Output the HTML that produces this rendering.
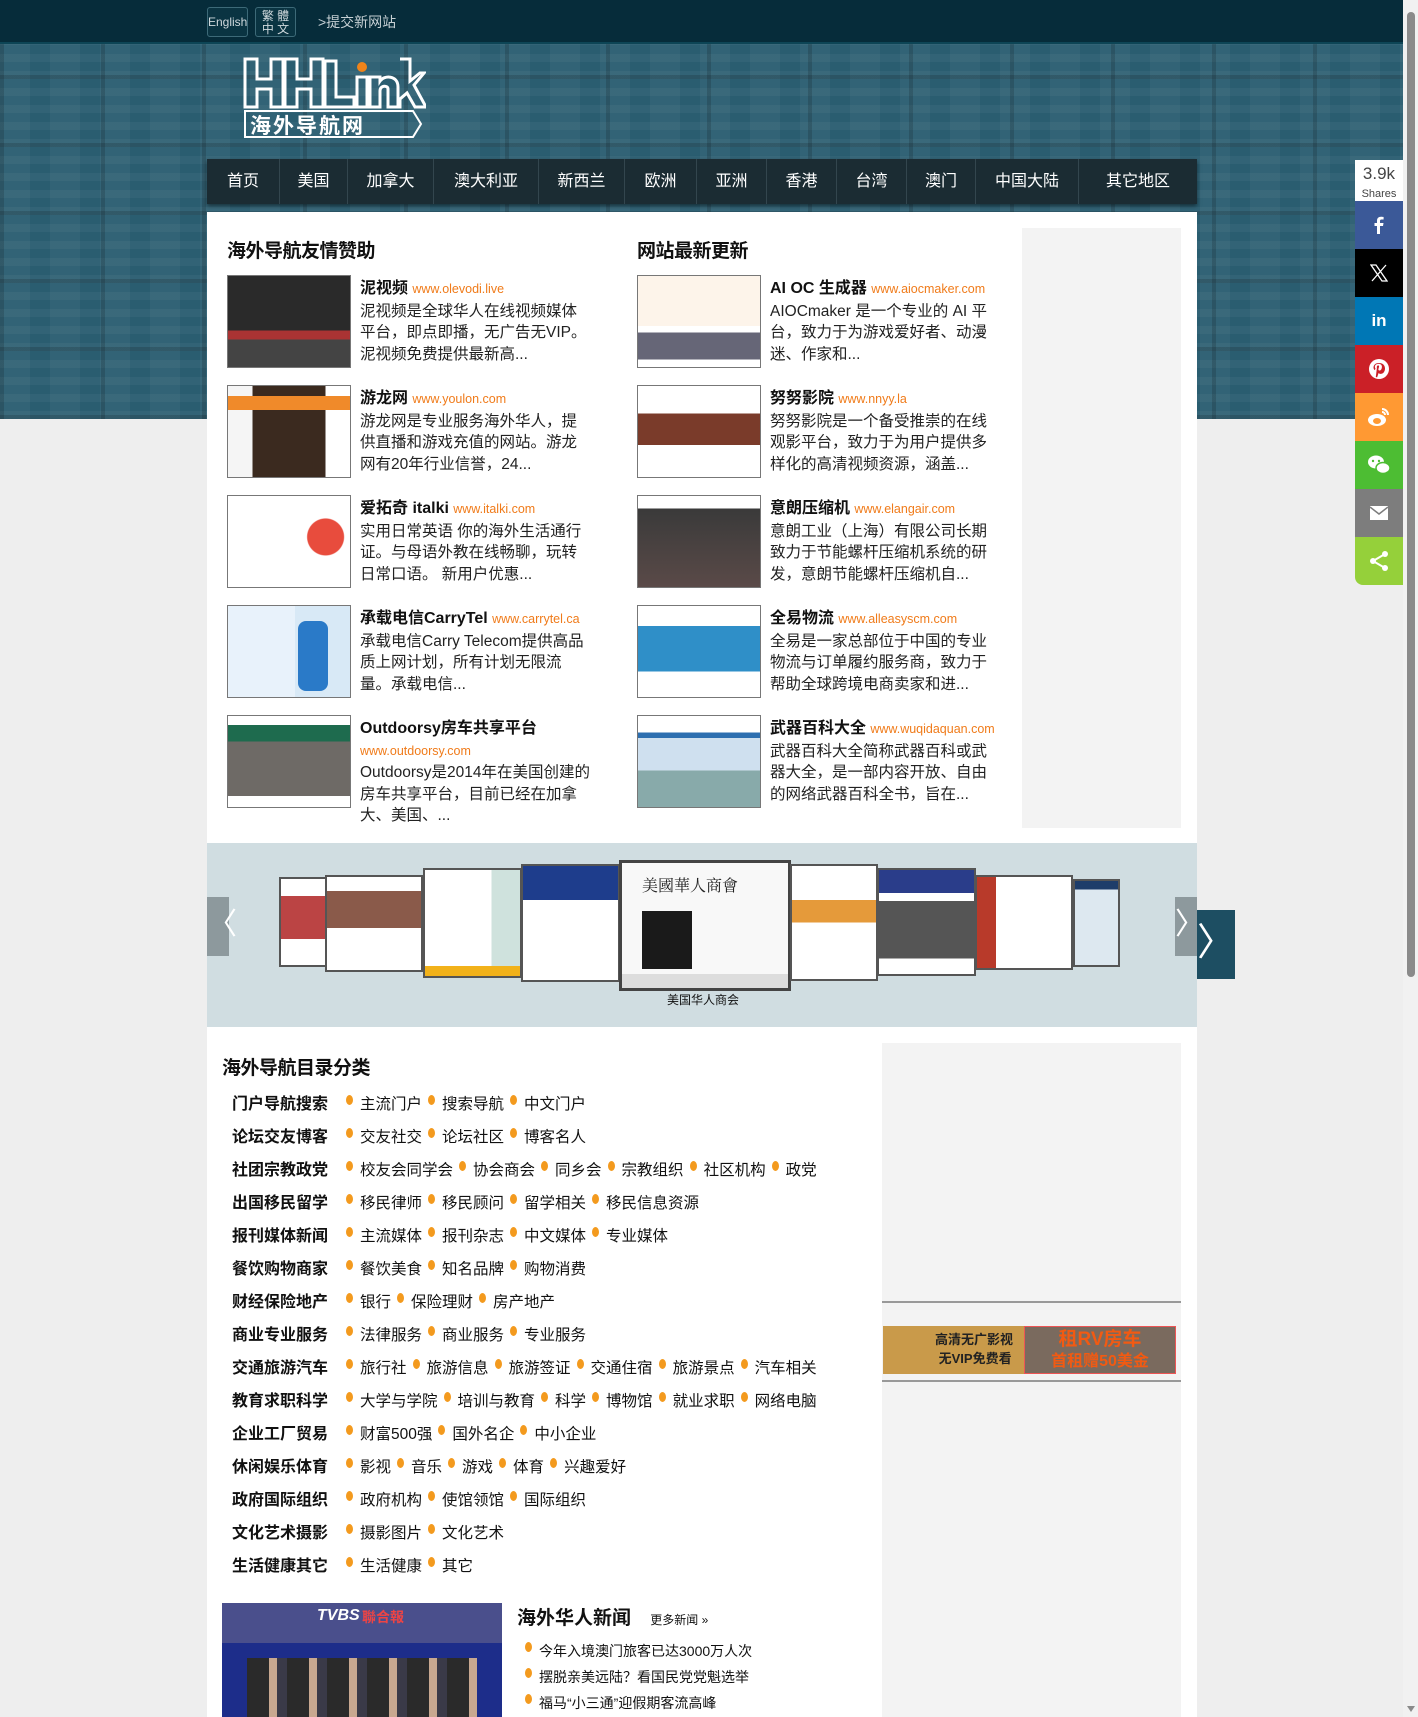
<!DOCTYPE html>
<html><head><meta charset="utf-8">
<style>
*{margin:0;padding:0;box-sizing:border-box}
body{width:1418px;height:1717px;overflow:hidden;position:relative;background:#eeeeee;font-family:"Liberation Sans","Noto Sans CJK SC",sans-serif;color:#111}
.abs{position:absolute}
#top{left:0;top:0;width:1403px;height:44px;background:#062c3a;border-bottom:2px solid #0d4556}
#hdr{left:0;top:44px;width:1403px;height:375px;background-color:#2a5d70;
background-image:repeating-linear-gradient(90deg,rgba(0,0,0,.15) 0 4px,transparent 4px 101px),repeating-linear-gradient(0deg,rgba(0,0,0,.15) 0 4px,transparent 4px 68px),repeating-linear-gradient(90deg,rgba(255,255,255,.04) 0 30px,transparent 30px 50px),repeating-linear-gradient(0deg,rgba(255,255,255,.04) 0 8px,transparent 8px 17px);}
.lb{border:1px solid #3d6a78;border-radius:3px;color:#cfd8dc;font-size:13px;text-align:center;background:#0a3442}
#nav{left:207px;top:159px;width:990px;height:45px;background:#1b2c33;box-shadow:0 2px 4px rgba(0,0,0,.5);display:flex}
#nav div{color:#fff;font-size:16px;line-height:45px;text-align:center;border-right:1px solid #33464e}
#main{left:207px;top:212px;width:990px;height:631px;background:#fff}
h2{font-size:19px;font-weight:bold;position:absolute;color:#111;letter-spacing:-.5px}
.item{position:absolute;width:380px;height:100px}
.item .th{position:absolute;left:0;top:0;width:124px;height:93px;border:1px solid #777;overflow:hidden}
.item .tx{position:absolute;left:133px;top:3px;width:230px;font-size:15.5px;line-height:21.5px;color:#222}
.item b{font-size:16px;color:#111}
.item i{font-style:normal;color:#f07b1a;font-size:12.5px}
#car{left:207px;top:843px;width:990px;height:184px;background:#d0dde1}
.sh{position:absolute;border:2px solid #555;overflow:hidden;background:#fff}
#low{left:207px;top:1027px;width:990px;height:690px;background:#fff}
.row{position:absolute;left:25px;font-size:15.5px;height:22px;line-height:22px;white-space:nowrap}
.row b{display:inline-block;width:114px;font-size:16px}
.row span{margin-right:6px}
.row span:before{content:"";display:inline-block;width:7px;height:10px;border-radius:50%;background:#f39a1e;margin-right:7px;vertical-align:4px}
#share{left:1355px;top:160px;width:48px}
#share div.b{height:48px;display:flex;align-items:center;justify-content:center}
</style></head><body>
<div id="top" class="abs">
 <div class="abs lb" style="left:207px;top:7px;width:41px;height:30px;line-height:28px;font-size:12px">English</div>
 <div class="abs lb" style="left:255px;top:7px;width:41px;height:30px;line-height:13px;font-size:12px;padding-top:2px">繁 體<br>中 文</div>
 <div class="abs" style="left:318px;top:12px;color:#c6d0d4;font-size:14px">&gt;提交新网站</div>
</div>
<div id="hdr" class="abs"></div>
<svg class="abs" style="left:242px;top:57px" width="184" height="90" viewBox="0 0 184 90">
 <g fill="none" stroke="#fff" stroke-width="3">
  <path d="M3 2h12v20h14v-20h12v48h-12v-18h-14v18h-12z"/>
  <path d="M43 2h12v20h14v-20h12v48h-12v-18h-14v18h-12z"/>
  <path d="M83 4h11v36h18v10h-29z"/>
  <path d="M115 20h10v30h-10z"/>
  <path d="M128 20h10v4c4-6 18-6 18 6v20h-10v-18c0-4-8-4-8 2v16h-10z"/>
  <path d="M158 2h10v22l10-8h4l-10 12 12 22h-11l-8-14-7 6v8h-10"/>
  <path d="M3 54h168l8 13-8 13h-168z" stroke-width="2"/>
 </g>
 <circle cx="120" cy="10" r="5" fill="#f0841a"/>
 <text x="8" y="76" fill="#fff" font-size="21" font-family="Noto Sans CJK SC,sans-serif" font-weight="bold" letter-spacing="2">海外导航网</text>
</svg>
<div id="nav" class="abs">
 <div style="width:73px">首页</div><div style="width:68px">美国</div><div style="width:86px">加拿大</div><div style="width:105px">澳大利亚</div><div style="width:86px">新西兰</div><div style="width:72px">欧洲</div><div style="width:70px">亚洲</div><div style="width:70px">香港</div><div style="width:70px">台湾</div><div style="width:69px">澳门</div><div style="width:103px">中国大陆</div><div style="width:118px;border:none">其它地区</div>
</div>

<div id="main" class="abs">
 <h2 style="left:20px;top:24px">海外导航友情赞助</h2>
 <h2 style="left:430px;top:24px">网站最新更新</h2>
 <div class="abs" style="left:815px;top:16px;width:159px;height:600px;background:#f3f3f3"></div>

 <div class="item" style="left:20px;top:63px"><div class="th" style="background:linear-gradient(#2a2a2a 0 60%,#a33 60% 70%,#444 70%)"></div><div class="tx"><b>泥视频</b> <i>www.olevodi.live</i><br>泥视频是全球华人在线视频媒体平台，即点即播，无广告无VIP。泥视频免费提供最新高...</div></div>
 <div class="item" style="left:20px;top:173px"><div class="th" style="background:linear-gradient(90deg,#f5f5f5 0 20%,#3b2a1f 20% 80%,#fff 80%);"><div style="height:14px;background:#f08a2a;margin-top:10px"></div></div><div class="tx"><b>游龙网</b> <i>www.youlon.com</i><br>游龙网是专业服务海外华人，提供直播和游戏充值的网站。游龙网有20年行业信誉，24...</div></div>
 <div class="item" style="left:20px;top:283px"><div class="th" style="background:radial-gradient(circle at 80% 45%,#e84c3d 0 18px,#fff 19px)"></div><div class="tx"><b>爱拓奇 italki</b> <i>www.italki.com</i><br>实用日常英语 你的海外生活通行证。与母语外教在线畅聊，玩转日常口语。 新用户优惠...</div></div>
 <div class="item" style="left:20px;top:393px"><div class="th" style="background:linear-gradient(90deg,#e8f2fb 0 55%,#d8e9f6 55%)"><div style="position:absolute;left:70px;top:15px;width:30px;height:70px;background:#2a7ac8;border-radius:8px"></div></div><div class="tx"><b>承载电信CarryTel</b> <i>www.carrytel.ca</i><br>承载电信Carry Telecom提供高品质上网计划，所有计划无限流量。承载电信...</div></div>
 <div class="item" style="left:20px;top:503px"><div class="th" style="background:linear-gradient(#fff 0 10%,#1e6b4e 10% 28%,#6e6a66 28% 88%,#fff 88%)"></div><div class="tx"><b>Outdoorsy房车共享平台</b><br><i>www.outdoorsy.com</i><br>Outdoorsy是2014年在美国创建的房车共享平台，目前已经在加拿大、美国、...</div></div>

 <div class="item" style="left:430px;top:63px"><div class="th" style="background:linear-gradient(#fdf4ea 0 55%,#fff 55% 62%,#667 62% 92%,#fff 92%)"></div><div class="tx" style="width:232px"><b>AI OC 生成器</b> <i>www.aiocmaker.com</i><br>AIOCmaker 是一个专业的 AI 平台，致力于为游戏爱好者、动漫迷、作家和...</div></div>
 <div class="item" style="left:430px;top:173px"><div class="th" style="background:linear-gradient(#fff 0 30%,#7a3b2a 30% 65%,#fff 65%)"></div><div class="tx" style="width:230px"><b>努努影院</b> <i>www.nnyy.la</i><br>努努影院是一个备受推崇的在线观影平台，致力于为用户提供多样化的高清视频资源，涵盖...</div></div>
 <div class="item" style="left:430px;top:283px"><div class="th" style="background:linear-gradient(#fff 0 14%,#3a3a3a 14%,#5a4a48)"></div><div class="tx" style="width:230px"><b>意朗压缩机</b> <i>www.elangair.com</i><br>意朗工业（上海）有限公司长期致力于节能螺杆压缩机系统的研发，意朗节能螺杆压缩机自...</div></div>
 <div class="item" style="left:430px;top:393px"><div class="th" style="background:linear-gradient(#fff 0 22%,#2f8fc8 22% 72%,#fff 72%)"></div><div class="tx" style="width:230px"><b>全易物流</b> <i>www.alleasyscm.com</i><br>全易是一家总部位于中国的专业物流与订单履约服务商，致力于帮助全球跨境电商卖家和进...</div></div>
 <div class="item" style="left:430px;top:503px"><div class="th" style="background:linear-gradient(#fff 0 18%,#2d6fb0 18% 24%,#cfe0ef 24% 60%,#8aa 60%)"></div><div class="tx" style="width:230px"><b>武器百科大全</b> <i>www.wuqidaquan.com</i><br>武器百科大全简称武器百科或武器大全，是一部内容开放、自由的网络武器百科全书，旨在...</div></div>
</div>

<div id="car" class="abs">
 <div class="abs" style="left:0;top:54px;width:22px;height:59px;background:#8d999d;color:#fff;font-size:30px;line-height:56px;text-align:center">〈</div>
 <div class="abs" style="left:968px;top:54px;width:22px;height:59px;background:#8d999d;color:#fff;font-size:30px;line-height:56px;text-align:center">〉</div>
 <div class="sh" style="left:72px;top:34px;width:48px;height:90px;background:linear-gradient(#fff 0 20%,#b44 20% 70%,#fff 70%)"></div>
 <div class="sh" style="left:118px;top:32px;width:98px;height:97px;background:linear-gradient(#fff 0 15%,#8a5a4a 15% 55%,#fff 55%)"></div>
 <div class="sh" style="left:216px;top:25px;width:99px;height:110px;background:linear-gradient(90deg,#fff 0 70%,#cfe2dd 70%)"><div style="position:absolute;bottom:0;height:10px;width:100%;background:#f2b21a"></div></div>
 <div class="sh" style="left:314px;top:21px;width:99px;height:118px;background:linear-gradient(#1e3d8c 0 30%,#fff 30%)"></div>
 <div class="sh" style="left:412px;top:17px;width:172px;height:131px;border:3px solid #444;background:#f8f8f8">
  <div style="position:absolute;left:20px;top:10px;font-size:16px;color:#222;font-family:'Noto Serif CJK SC',serif">美國華人商會</div>
  <div style="position:absolute;left:20px;top:48px;width:50px;height:58px;background:#1a1a1a"></div>
  <div style="position:absolute;left:0;bottom:0;width:100%;height:14px;background:#ddd"></div>
 </div>
 <div class="sh" style="left:583px;top:21px;width:88px;height:117px;background:linear-gradient(#fff 0 30%,#e59a3a 30% 50%,#fff 50%)"></div>
 <div class="sh" style="left:670px;top:25px;width:99px;height:108px;background:linear-gradient(#2a3d8a 0 22%,#fff 22% 30%,#555 30% 85%,#fff 85%)"></div>
 <div class="sh" style="left:768px;top:32px;width:98px;height:95px;background:linear-gradient(90deg,#b83a2a 0 20%,#fff 20%)"></div>
 <div class="sh" style="left:866px;top:36px;width:47px;height:88px;background:linear-gradient(#1e3d6a 0 10%,#dde8f0 10%)"></div>
 <div class="abs" style="left:460px;top:148px;font-size:12px;color:#111">美国华人商会</div>
</div>
<div class="abs" style="left:1197px;top:910px;width:38px;height:69px;background:#1d4e62;color:#fff;font-size:38px;line-height:66px;text-align:center">〉</div>

<div id="low" class="abs">
 <h2 style="left:15px;top:26px">海外导航目录分类</h2>
 <div class="abs" style="left:675px;top:16px;width:299px;height:674px;background:#f3f3f3">
  <div class="abs" style="left:0;top:258px;width:299px;height:2px;background:#999"></div>
  <div class="abs" style="left:1px;top:283px;width:141px;height:48px;background:#c99a4a;font-size:13px;font-weight:bold;line-height:19px;padding:4px 0 0 52px;color:#222;white-space:nowrap">高清无广影视<br>&nbsp;无VIP免费看</div>
  <div class="abs" style="left:142px;top:283px;width:152px;height:48px;background:#7a6a5e;border:1px solid #e55;color:#f25a12;font-size:19px;font-weight:bold;line-height:21px;text-align:center;padding-top:2px;white-space:nowrap">租RV房车<br><span style="font-size:16px">首租赠50美金</span></div>
  <div class="abs" style="left:0;top:337px;width:299px;height:2px;background:#999"></div>
 </div>
 <div class="row" style="top:67px"><b>门户导航搜索</b><span>主流门户</span><span>搜索导航</span><span>中文门户</span></div>
 <div class="row" style="top:100px"><b>论坛交友博客</b><span>交友社交</span><span>论坛社区</span><span>博客名人</span></div>
 <div class="row" style="top:133px"><b>社团宗教政党</b><span>校友会同学会</span><span>协会商会</span><span>同乡会</span><span>宗教组织</span><span>社区机构</span><span>政党</span></div>
 <div class="row" style="top:166px"><b>出国移民留学</b><span>移民律师</span><span>移民顾问</span><span>留学相关</span><span>移民信息资源</span></div>
 <div class="row" style="top:199px"><b>报刊媒体新闻</b><span>主流媒体</span><span>报刊杂志</span><span>中文媒体</span><span>专业媒体</span></div>
 <div class="row" style="top:232px"><b>餐饮购物商家</b><span>餐饮美食</span><span>知名品牌</span><span>购物消费</span></div>
 <div class="row" style="top:265px"><b>财经保险地产</b><span>银行</span><span>保险理财</span><span>房产地产</span></div>
 <div class="row" style="top:298px"><b>商业专业服务</b><span>法律服务</span><span>商业服务</span><span>专业服务</span></div>
 <div class="row" style="top:331px"><b>交通旅游汽车</b><span>旅行社</span><span>旅游信息</span><span>旅游签证</span><span>交通住宿</span><span>旅游景点</span><span>汽车相关</span></div>
 <div class="row" style="top:364px"><b>教育求职科学</b><span>大学与学院</span><span>培训与教育</span><span>科学</span><span>博物馆</span><span>就业求职</span><span>网络电脑</span></div>
 <div class="row" style="top:397px"><b>企业工厂贸易</b><span>财富500强</span><span>国外名企</span><span>中小企业</span></div>
 <div class="row" style="top:430px"><b>休闲娱乐体育</b><span>影视</span><span>音乐</span><span>游戏</span><span>体育</span><span>兴趣爱好</span></div>
 <div class="row" style="top:463px"><b>政府国际组织</b><span>政府机构</span><span>使馆领馆</span><span>国际组织</span></div>
 <div class="row" style="top:496px"><b>文化艺术摄影</b><span>摄影图片</span><span>文化艺术</span></div>
 <div class="row" style="top:529px"><b>生活健康其它</b><span>生活健康</span><span>其它</span></div>

 <div class="abs" style="left:15px;top:576px;width:280px;height:114px;background:linear-gradient(#4a4f8c 0 35%,#1d2d8a 35%)">
  <div class="abs" style="left:95px;top:4px;color:#fff;font-weight:bold;font-style:italic;font-size:16px">TVBS</div>
  <div class="abs" style="left:140px;top:4px;color:#e44;font-weight:bold;font-size:14px">聯合報</div>
  <div class="abs" style="left:25px;top:55px;width:230px;height:59px;background:repeating-linear-gradient(90deg,#2a2a2a 0 22px,#c8a890 22px 30px,#3a3a48 30px 40px)"></div>
 </div>
 <div class="abs" style="left:310px;top:576px;font-size:19px;font-weight:bold">海外华人新闻 <span style="font-size:12px;font-weight:normal;margin-left:14px">更多新闻 »</span></div>
 <div class="row" style="left:318px;top:613px;font-size:14px"><span>今年入境澳门旅客已达3000万人次</span></div>
 <div class="row" style="left:318px;top:639px;font-size:14px"><span>摆脱亲美远陆？看国民党党魁选举</span></div>
 <div class="row" style="left:318px;top:665px;font-size:14px"><span>福马“小三通”迎假期客流高峰</span></div>
</div>

<div id="share" class="abs">
 <div style="height:41px;background:#fff;text-align:center;color:#444;font-size:17px;line-height:18px;padding-top:5px">3.9k<br><span style="font-size:11px">Shares</span></div>
 <div class="b" style="background:#3b5998"><svg width="20" height="20" viewBox="0 0 20 20"><path d="M11 19v-8h3l.5-3H11V6c0-1 .4-1.5 1.6-1.5H14.6V2c-.6-.1-1.6-.2-2.6-.2-2.6 0-4 1.5-4 4V8H5.5v3H8v8z" fill="#fff"/></svg></div>
 <div class="b" style="background:#000"><svg width="18" height="18" viewBox="0 0 18 18"><path d="M1 1h5l11 16h-5z M16 1L2 17" stroke="#fff" stroke-width="1.3" fill="none"/></svg></div>
 <div class="b" style="background:#0077b5;color:#fff;font-weight:bold;font-size:17px">in</div>
 <div class="b" style="background:#cb2027"><svg width="24" height="24" viewBox="0 0 24 24"><circle cx="12" cy="12" r="10" fill="#fff"/><path d="M12 6c-4 0-5.5 2.5-5.5 4.5 0 1.3.6 2.3 1.4 2.6l.6-1.7c-.3-.3-.6-.8-.6-1.5 0-2 1.5-3 3.8-3 2.1 0 3.2 1.2 3.2 2.8 0 2.2-1 3.8-2.4 3.8-.8 0-1.300-.6-1.1-1.4.2-1 .7-2 .7-2.7 0-1.6-2.3-1.4-2.3.7 0 .5.1.9.1.9L8.8 20l1.3.4 1.5-4.4c.4.6 1.2.9 2 .9 2.6 0 4.4-2.4 4.4-5.4C18 8.3 15.7 6 12 6z" fill="#cb2027"/></svg></div>
 <div class="b" style="background:#ff9933"><svg width="26" height="22" viewBox="0 0 26 22"><ellipse cx="11" cy="14" rx="9" ry="6" fill="#fff"/><ellipse cx="11" cy="15" rx="4" ry="3" fill="#ff9933"/><path d="M16 3a6 6 0 0 1 6 6M16 6a3 3 0 0 1 3 3" stroke="#fff" stroke-width="2" fill="none"/></svg></div>
 <div class="b" style="background:#4dbd33"><svg width="26" height="22" viewBox="0 0 26 22"><ellipse cx="10" cy="8" rx="8" ry="6.5" fill="#fff"/><ellipse cx="17" cy="14" rx="7" ry="5.5" fill="#fff" stroke="#4dbd33" stroke-width="1.5"/><circle cx="7" cy="7" r="1.2" fill="#4dbd33"/><circle cx="13" cy="7" r="1.2" fill="#4dbd33"/></svg></div>
 <div class="b" style="background:#7d7d7d"><svg width="20" height="16" viewBox="0 0 20 16"><rect x="1" y="1" width="18" height="14" fill="#fff"/><path d="M1 2l9 7 9-7" stroke="#7d7d7d" stroke-width="1.5" fill="none"/></svg></div>
 <div class="b" style="background:#95d03a;border-bottom-left-radius:8px"><svg width="22" height="22" viewBox="0 0 22 22"><circle cx="17" cy="4" r="3" fill="#fff"/><circle cx="5" cy="11" r="3" fill="#fff"/><circle cx="17" cy="18" r="3" fill="#fff"/><path d="M17 4L5 11l12 7" stroke="#fff" stroke-width="2" fill="none"/></svg></div>
</div>

<div class="abs" style="left:1403px;top:0;width:15px;height:1717px;background:#f1f1f1">
 <div class="abs" style="left:4px;top:12px;width:8px;height:965px;background:#8a8a8a;border-radius:4px"></div>
 <div class="abs" style="left:4px;top:1706px;width:0;height:0;border-left:4px solid transparent;border-right:4px solid transparent;border-top:6px solid #8a8a8a"></div>
</div>
</body></html>
